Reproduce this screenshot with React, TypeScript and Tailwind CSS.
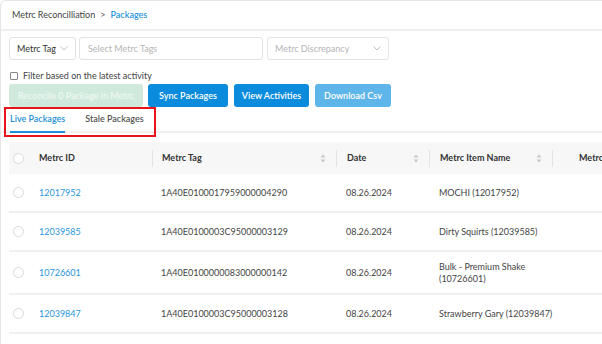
import React from "react";

const font = { fontFamily: "Lato, 'Noto Sans', sans-serif" };

function Chevron() {
  return (
    <svg width="8" height="5" viewBox="0 0 8 5" fill="none">
      <path d="M0.5 0.5 L4 4 L7.5 0.5" stroke="#b8b8b8" strokeWidth="0.9" />
    </svg>
  );
}

function Sort() {
  return (
    <svg width="6" height="9" viewBox="0 0 6 9">
      <path d="M3 0.5 L5.5 3.5 H0.5 Z" fill="#c8c8c8" />
      <path d="M3 8.5 L5.5 5.5 H0.5 Z" fill="#c8c8c8" />
    </svg>
  );
}

function Circle() {
  return <div className="w-[11px] h-[11px] rounded-full border border-[#d9d9d9] bg-white" />;
}

const rows = [
  { id: "12017952", tag: "1A40E0100017959000004290", date: "08.26.2024", name: ["MOCHI (12017952)"], h: "h-[39px]" },
  { id: "12039585", tag: "1A40E0100003C95000003129", date: "08.26.2024", name: ["Dirty Squirts (12039585)"], h: "h-[39px]" },
  { id: "10726601", tag: "1A40E0100000083000000142", date: "08.26.2024", name: ["Bulk - Premium Shake", "(10726601)"], h: "h-[43px]" },
  { id: "12039847", tag: "1A40E0100003C95000003128", date: "08.26.2024", name: ["Strawberry Gary (12039847)"], h: "h-[39px]" },
];

const cols = "grid grid-cols-[21px_122px_184px_93px_123px_1fr]";

export default function App() {
  return (
    <div style={font} className="w-[602px] h-[344px] overflow-hidden bg-white text-[9px] text-[#444]">
      <div className="h-full border-l border-t border-[#e6e6e6] rounded-tl-md">
        <div className="h-[30px] flex items-center pl-[11px] border-b-2 border-[#efefef]">
          <span className="text-[#444]">Metrc Reconcilliation</span>
          <span className="mx-[5px] text-[#555]">&gt;</span>
          <span className="text-[#2b95db] font-semibold">Packages</span>
        </div>
        <div className="pl-[8px]">
          <div className="flex gap-[3px] mt-[6px] h-[23px]">
            <div className="w-[67px] border border-[#e3e3e3] rounded-[3px] flex items-center justify-between px-[7px]">
              <span className="text-[#333]">Metrc Tag</span>
              <Chevron />
            </div>
            <div className="w-[184px] border border-[#e3e3e3] rounded-[3px] flex items-center px-[8px] text-[#b5b5b5]">
              Select Metrc Tags
            </div>
            <div className="ml-[1px] w-[122px] border border-[#e3e3e3] rounded-[3px] flex items-center justify-between px-[7px] text-[#b5b5b5]">
              <span>Metrc Discrepancy</span>
              <Chevron />
            </div>
          </div>
          <div className="flex items-center mt-[10px] h-[12px]">
            <div className="w-[8px] h-[8px] border border-[#888] rounded-[1px] ml-[1px]" />
            <span className="ml-[5px] text-[#444]">Filter based on the latest activity</span>
          </div>
          <div className="flex mt-[2px] h-[23px] gap-[5px] font-semibold text-white">
            <div className="w-[134px] rounded-[3px] bg-[#cfe9dc] flex items-center justify-center text-[#eef8f3]">
              Reconcile 0 Package in Metrc
            </div>
            <div className="w-[80px] rounded-[3px] bg-[#0a8bdb] flex items-center justify-center">Sync Packages</div>
            <div className="ml-[1px] w-[75px] rounded-[3px] bg-[#0a8bdb] flex items-center justify-center">View Activities</div>
            <div className="ml-[1px] w-[76px] rounded-[3px] bg-[#5eb5ea] flex items-center justify-center">Download Csv</div>
          </div>
        </div>
        <div className="relative border-b-2 border-[#f0f0f0] h-[26px]">
          <div className="absolute left-[3px] top-0 w-[152px] h-[30px] border-2 border-[#e8141b]" />
          <div className="flex h-full pl-[9px] gap-[20px] font-semibold">
            <div className="relative flex items-center text-[#1e8fd8]">
              Live Packages
              <div className="absolute left-0 right-0 bottom-[-2px] h-[2px] bg-[#1e8fd8]" />
            </div>
            <div className="flex items-center text-[#555]">Stale Packages</div>
          </div>
        </div>
        <div className="ml-[8px] mt-[9px]">
          <div className={`${cols} h-[32px] bg-[#f7f7f7] items-center font-bold text-[#333]`}>
            <div className="pl-[4px]"><Circle /></div>
            <div className="pl-[9px]">Metrc ID</div>
            <div className="flex items-center justify-between pr-[10px] border-l border-[#e3e3e3] pl-[9px] h-[17px]">
              <span>Metrc Tag</span><Sort />
            </div>
            <div className="flex items-center justify-between pr-[10px] border-l border-[#e3e3e3] pl-[10px] h-[17px]">
              <span>Date</span><Sort />
            </div>
            <div className="flex items-center justify-between pr-[10px] border-l border-[#e3e3e3] pl-[10px] h-[17px]">
              <span>Metrc Item Name</span><Sort />
            </div>
            <div className="border-l border-[#e3e3e3] pl-[26px] h-[17px] flex items-center whitespace-nowrap">Metrc</div>
          </div>
          {rows.map((r) => (
            <div key={r.id} className={`${cols} ${r.h} items-center border-b-2 border-[#f0f0f0] text-[#444]`}>
              <div className="pl-[4px]"><Circle /></div>
              <div className="pl-[9px] text-[#2b95db]">{r.id}</div>
              <div className="pl-[9px]">{r.tag}</div>
              <div className="pl-[10px]">{r.date}</div>
              <div className="pl-[10px] leading-[12px]">
                {r.name.map((n) => (
                  <div key={n} className="whitespace-nowrap">{n}</div>
                ))}
              </div>
              <div />
            </div>
          ))}
        </div>
      </div>
    </div>
  );
}
